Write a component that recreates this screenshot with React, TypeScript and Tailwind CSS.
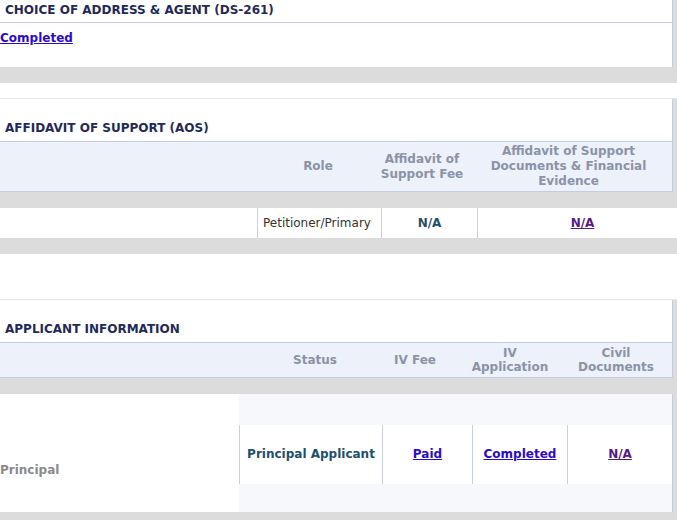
const font = { fontFamily: '"DejaVu Sans", Verdana, sans-serif' };

function SectionTitle({ children, className }: { children: string; className: string }) {
  return (
    <div className={`flex w-[673px] border-r border-[#c5cce0] bg-white pl-[5px] text-[12px] font-bold text-[#1f2a5c] ${className}`}>
      {children}
    </div>
  );
}

export default function App() {
  return (
    <div className="min-h-[520px] w-[677px] bg-[#dcdcdc] text-[12px]" style={font}>
      {/* DS-261 */}
      <div className="w-[673px] border-r border-[#c5cce0] bg-white">
        <SectionTitle className="h-[23px] items-center border-b border-[#c3cbe0] pb-[3px]">CHOICE OF ADDRESS &amp; AGENT (DS-261)</SectionTitle>
        <div className="h-[44px] pt-[6px]">
          <a href="#" className="font-bold text-[#2a0ccf] underline">
            Completed
          </a>
        </div>
      </div>
      <div className="h-[16px]" />
      <div className="h-[15px] bg-white" />

      {/* AOS */}
      <div className="border-t border-[#e4e6ee]">
        <SectionTitle className="h-[43px] items-end border-b border-[#c3cbe0] pb-[4px]">AFFIDAVIT OF SUPPORT (AOS)</SectionTitle>
        <div className="flex h-[50px] w-[673px] items-center border-r border-b border-[#c5cce0] bg-[#edf1f9] text-center font-bold leading-[15px] whitespace-nowrap text-[#8a93a8]">
          <div className="w-[257px]" />
          <div className="w-[122px]">Role</div>
          <div className="w-[86px]">
            Affidavit of
            <br />
            Support Fee
          </div>
          <div className="w-[207px]">
            Affidavit of Support
            <br />
            Documents &amp; Financial
            <br />
            Evidence
          </div>
        </div>
      </div>
      <div className="h-[16px]" />
      <div className="flex h-[30px] bg-white">
        <div className="w-[257px]" />
        <div className="flex w-[124px] items-center border-l border-[#c8d0e4] pl-[5px] text-[#333]">Petitioner/Primary</div>
        <div className="flex w-[96px] items-center justify-center border-l border-[#c8d0e4] font-bold text-[#1f4f6e]">N/A</div>
        <div className="flex w-[200px] items-center justify-center border-l border-[#c8d0e4] pl-[10px]">
          <a href="#" className="font-bold text-[#551a8b] underline">
            N/A
          </a>
        </div>
      </div>
      <div className="h-[16px]" />
      <div className="h-[45px] bg-white" />

      {/* Applicant */}
      <div className="border-t border-[#e4e6ee]">
        <SectionTitle className="h-[43px] items-end border-b border-[#c3cbe0] pb-[4px]">APPLICANT INFORMATION</SectionTitle>
        <div className="flex h-[35px] w-[673px] items-center border-r border-b border-[#c5cce0] bg-[#edf1f9] text-center font-bold leading-[14px] text-[#8a93a8]">
          <div className="w-[250px]" />
          <div className="w-[130px]">Status</div>
          <div className="w-[70px]">IV Fee</div>
          <div className="w-[120px]">
            IV
            <br />
            Application
          </div>
          <div className="w-[92px]">
            Civil
            <br />
            Documents
          </div>
        </div>
      </div>
      <div className="h-[16px]" />
      <div className="flex h-[118px] w-[673px] border-r border-[#c5cce0]">
        <div className="flex w-[239px] items-end bg-white pb-[33px] font-bold text-[#8a8a8a]">Principal</div>
        <div className="flex flex-1 items-center bg-[#f7f8fb] pt-[2px]">
          <div className="flex h-[59px] w-full bg-white">
            <div className="flex w-[143px] items-center justify-center border-l border-[#c8d0e4] font-bold text-[#1d5070]">Principal Applicant</div>
            <div className="flex w-[90px] items-center justify-center border-l border-[#c8d0e4]">
              <a href="#" className="font-bold text-[#2a0ccf] underline">
                Paid
              </a>
            </div>
            <div className="flex w-[95px] items-center justify-center border-l border-[#c8d0e4]">
              <a href="#" className="font-bold text-[#2a0ccf] underline">
                Completed
              </a>
            </div>
            <div className="flex flex-1 items-center justify-center border-l border-[#c8d0e4]">
              <a href="#" className="font-bold text-[#551a8b] underline">
                N/A
              </a>
            </div>
          </div>
        </div>
      </div>
    </div>
  );
}
